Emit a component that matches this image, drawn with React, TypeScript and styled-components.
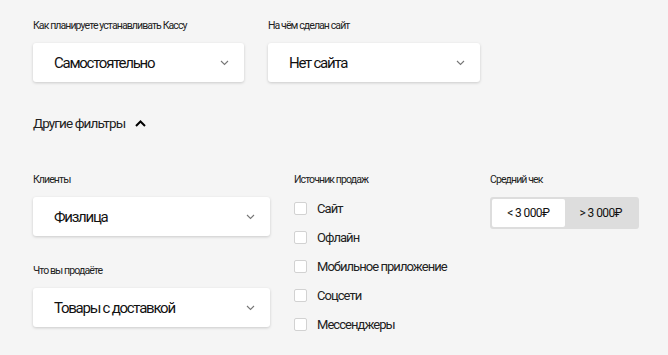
import * as React from "react";
import styled, { createGlobalStyle } from "styled-components";

const GlobalStyle = createGlobalStyle`
  html, body {
    margin: 0;
    padding: 0;
    background: #f5f5f5;
  }
  body {
    font-family: Roboto, "Open Sans", sans-serif;
    color: #000;
  }
`;

const sources = ["Сайт", "Офлайн", "Мобильное приложение", "Соцсети", "Мессенджеры"];

function Chevron() {
  return (
    <svg width="9" height="6" viewBox="0 0 9 6">
      <path d="M1 1l3.5 3.5L8 1" fill="none" stroke="#777" strokeWidth="1.1" />
    </svg>
  );
}

function Select({ value, width }: { value: string; width: number }) {
  return (
    <SelectBox $width={width}>
      <SelectValue>{value}</SelectValue>
      <Chevron />
    </SelectBox>
  );
}

export default function App() {
  const [check, setCheck] = React.useState<"low" | "high">("low");
  const [picked, setPicked] = React.useState<string[]>([]);

  const toggle = (s: string) =>
    setPicked((p) => (p.includes(s) ? p.filter((x) => x !== s) : [...p, s]));

  return (
    <Page>
      <GlobalStyle />
      <TopRow>
        <Field>
          <Label>Как планируете устанавливать Кассу</Label>
          <Select value="Самостоятельно" width={211} />
        </Field>
        <Field>
          <Label>На чём сделан сайт</Label>
          <Select value="Нет сайта" width={212} />
        </Field>
      </TopRow>

      <MoreToggle>
        Другие фильтры
        <svg width="11" height="7" viewBox="0 0 11 7">
          <path d="M1 6l4.5-4.5L10 6" fill="none" stroke="#000" strokeWidth="2" />
        </svg>
      </MoreToggle>

      <Filters>
        <Column $width={237}>
          <Field>
            <Label>Клиенты</Label>
            <Select value="Физлица" width={237} />
          </Field>
          <Field $spaced>
            <Label>Что вы продаёте</Label>
            <Select value="Товары с доставкой" width={237} />
          </Field>
        </Column>

        <Column $width={172}>
          <Label>Источник продаж</Label>
          <CheckList>
            {sources.map((s) => (
              <CheckRow key={s} onClick={() => toggle(s)}>
                <Box $on={picked.includes(s)} />
                {s}
              </CheckRow>
            ))}
          </CheckList>
        </Column>

        <Column $width={150}>
          <Label>Средний чек</Label>
          <Segmented>
            <Segment $active={check === "low"} onClick={() => setCheck("low")}>
              &lt; 3 000₽
            </Segment>
            <Segment $active={check === "high"} onClick={() => setCheck("high")}>
              &gt; 3 000₽
            </Segment>
          </Segmented>
        </Column>
      </Filters>
    </Page>
  );
}

const Page = styled.div`
  padding: 19px 0 0 33px;
`;

const TopRow = styled.div`
  display: flex;
  gap: 24px;
`;

const Field = styled.div<{ $spaced?: boolean }>`
  display: flex;
  flex-direction: column;
  margin-top: ${(p) => (p.$spaced ? "28px" : "0")};
`;

const Label = styled.div`
  font-size: 10.5px;
  letter-spacing: -0.9px;
  line-height: 13px;
  color: #222;
  margin-bottom: 11px;
`;

const SelectBox = styled.div<{ $width: number }>`
  width: ${(p) => p.$width}px;
  height: 39px;
  box-sizing: border-box;
  background: #fff;
  border-radius: 3px;
  box-shadow: 0 1px 3px rgba(0, 0, 0, 0.18);
  display: flex;
  align-items: center;
  justify-content: space-between;
  padding: 0 15px 0 21px;
  cursor: pointer;
`;

const SelectValue = styled.span`
  font-size: 15px;
  letter-spacing: -1.25px;
  color: #111;
`;

const MoreToggle = styled.div`
  margin-top: 33px;
  display: flex;
  align-items: center;
  gap: 10px;
  font-size: 13.5px;
  letter-spacing: -0.9px;
  color: #222;
  cursor: pointer;
`;

const Filters = styled.div`
  margin-top: 42px;
  display: flex;
  gap: 24px;
`;

const Column = styled.div<{ $width: number }>`
  width: ${(p) => p.$width}px;
  display: flex;
  flex-direction: column;
`;

const CheckList = styled.div`
  display: flex;
  flex-direction: column;
  gap: 13px;
  margin-top: 3px;
`;

const CheckRow = styled.label`
  display: flex;
  align-items: center;
  gap: 10px;
  height: 16px;
  font-size: 13px;
  letter-spacing: -0.95px;
  color: #222;
  cursor: pointer;
`;

const Box = styled.span<{ $on: boolean }>`
  width: 11px;
  height: 11px;
  border: 1px solid #d2d2d2;
  border-radius: 2px;
  background: ${(p) => (p.$on ? "#222" : "#fff")};
`;

const Segmented = styled.div`
  display: flex;
  width: 149px;
  height: 32px;
  box-sizing: border-box;
  padding: 2px;
  background: #dddddd;
  border-radius: 3px;
`;

const Segment = styled.div<{ $active: boolean }>`
  flex: 1;
  display: flex;
  align-items: center;
  justify-content: center;
  font-size: 12px;
  letter-spacing: -0.6px;
  color: #111;
  background: ${(p) => (p.$active ? "#fff" : "transparent")};
  border-radius: 2px;
  cursor: pointer;
`;
